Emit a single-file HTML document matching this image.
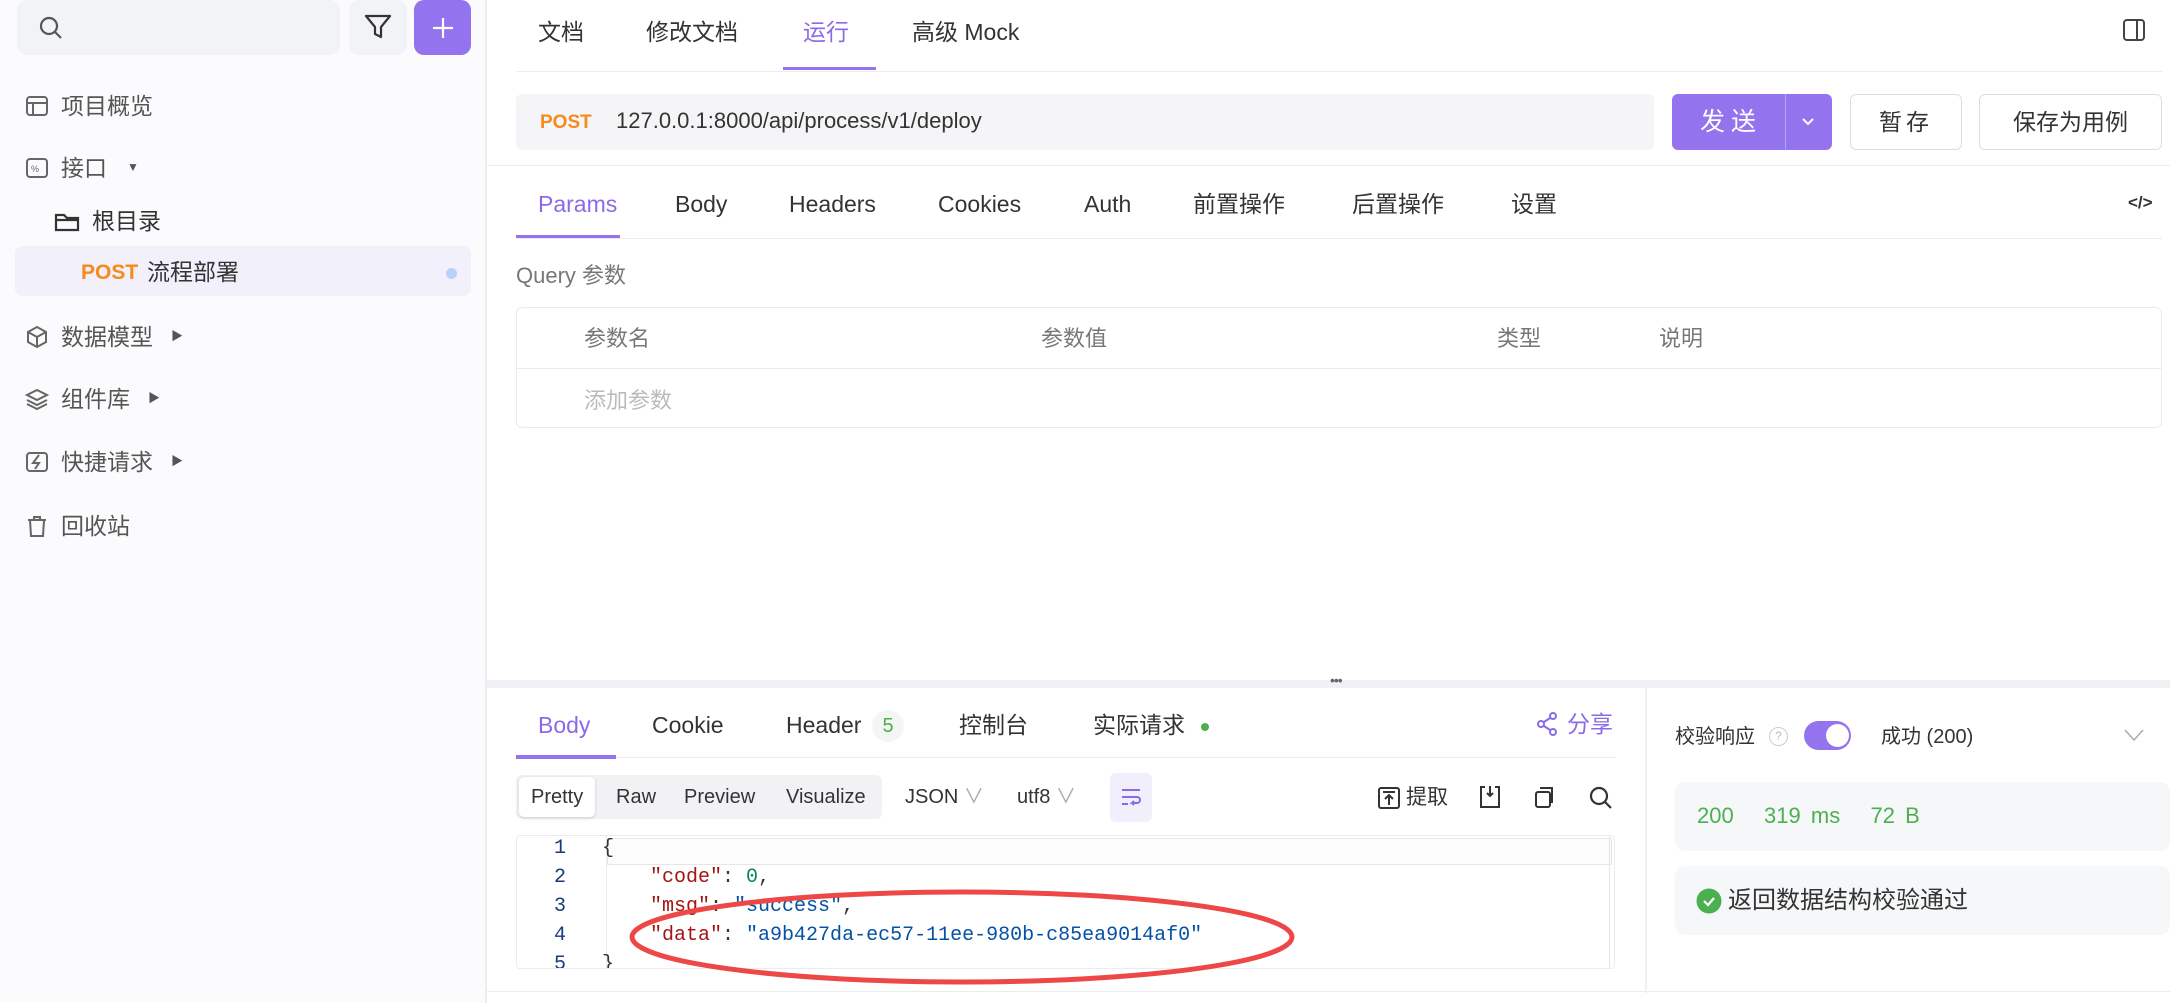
<!DOCTYPE html>
<html><head><meta charset="utf-8"><style>
*{box-sizing:border-box;margin:0;padding:0}
body{width:2170px;height:1003px;overflow:hidden;background:#fff;font-family:"Liberation Sans","Noto Sans CJK SC",sans-serif;color:#333;position:relative;line-height:1.15}
.a{position:absolute;white-space:nowrap}
.side{left:0;top:0;width:487px;height:1003px;background:#fbfbfd;border-right:2px solid #eeeef2}
.si{font-size:23px;color:#555;display:flex;align-items:center}
.si svg{margin-right:12px}
.tab{font-size:23px;color:#333}
.mono{font-family:"Liberation Mono",monospace;font-size:20px}
.ln{color:#1a3a7a;width:30px;text-align:right}
</style></head><body>
<div class="a side"></div>
<div class="a" style="left:17px;top:0;width:323px;height:55px;background:#f2f3f7;border-radius:10px"></div>
<svg class="a" style="left:38px;top:15px" width="26" height="26" viewBox="0 0 26 26" fill="none" stroke="#555" stroke-width="2.2"><circle cx="11" cy="11" r="8"/><path d="M17 17l6 6"/></svg>
<div class="a" style="left:349px;top:0;width:58px;height:55px;background:#f2f3f7;border-radius:10px"></div>
<svg class="a" style="left:364px;top:14px" width="28" height="26" viewBox="0 0 28 26" fill="none" stroke="#333" stroke-width="2.2" stroke-linejoin="round"><path d="M2 2h24l-9 11v10l-6-3v-7z"/></svg>
<div class="a" style="left:414px;top:0;width:57px;height:55px;background:#9373ee;border-radius:10px"></div>
<svg class="a" style="left:431px;top:16px" width="24" height="24" stroke="#fff" stroke-width="2.2"><path d="M12 2v20M2 12h20"/></svg>

<div class="a si" style="left:25px;top:93px"><svg width="24" height="24" fill="none" stroke="#666" stroke-width="2"><rect x="2" y="3" width="20" height="18" rx="3"/><path d="M2 9h20M8 9v12"/></svg>项目概览</div>
<div class="a si" style="left:25px;top:155px"><svg width="24" height="24" fill="none" stroke="#666" stroke-width="2"><rect x="2" y="3" width="20" height="18" rx="3"/><text x="6" y="16" font-size="9" fill="#666" stroke="none">%</text></svg>接口<span style="font-size:12px;margin-left:20px">▼</span></div>
<div class="a si" style="left:54px;top:208px;color:#333"><svg width="26" height="24" fill="none" stroke="#333" stroke-width="2.2"><path d="M2 6h8l3 3h11v12H2z"/><path d="M2 11h22"/></svg>根目录</div>
<div class="a" style="left:15px;top:246px;width:456px;height:50px;background:#f2f0fb;border-radius:8px"></div>
<div class="a" style="left:81px;top:261px;font-size:21px;font-weight:bold;color:#f7891d">POST</div>
<div class="a" style="left:147px;top:259px;font-size:23px;color:#333">流程部署</div>
<div class="a" style="left:446px;top:268px;width:11px;height:11px;border-radius:50%;background:#b9d0fb"></div>
<div class="a si" style="left:25px;top:324px"><svg width="24" height="24" fill="none" stroke="#666" stroke-width="2"><path d="M12 2l9 5v10l-9 5-9-5V7z M3 7l9 5 9-5M12 12v10"/></svg>数据模型<span style="font-size:12px;margin-left:18px">▶</span></div>
<div class="a si" style="left:25px;top:386px"><svg width="24" height="24" fill="none" stroke="#666" stroke-width="2"><path d="M12 3l10 5-10 5-10-5z M2 13l10 5 10-5M2 17l10 5 10-5"/></svg>组件库<span style="font-size:12px;margin-left:18px">▶</span></div>
<div class="a si" style="left:25px;top:449px"><svg width="24" height="24" fill="none" stroke="#666" stroke-width="2"><rect x="2" y="3" width="20" height="18" rx="3"/><path d="M14 5l-6 8h6l-4 6"/></svg>快捷请求<span style="font-size:12px;margin-left:18px">▶</span></div>
<div class="a si" style="left:25px;top:513px"><svg width="24" height="24" fill="none" stroke="#666" stroke-width="2"><path d="M3 6h18M9 6V3h6v3M5 6l1 16h12l1-16"/></svg>回收站</div>

<div class="a tab" style="left:538px;top:19px">文档</div>
<div class="a tab" style="left:646px;top:19px">修改文档</div>
<div class="a tab" style="left:803px;top:19px;color:#8b6ae8">运行</div>
<div class="a tab" style="left:912px;top:19px">高级 Mock</div>
<div class="a" style="left:783px;top:67px;width:93px;height:3px;background:#9373ee"></div>
<div class="a" style="left:516px;top:71px;width:1646px;height:1px;background:#ececf0"></div>
<svg class="a" style="left:2122px;top:18px" width="24" height="24" fill="none" stroke="#444" stroke-width="2"><rect x="2" y="2" width="20" height="20" rx="3"/><path d="M15 2v20"/></svg>

<div class="a" style="left:516px;top:94px;width:1138px;height:56px;background:#f5f5f7;border-radius:6px"></div>
<div class="a" style="left:540px;top:112px;font-size:19px;font-weight:bold;color:#f7891d">POST</div>
<div class="a" style="left:616px;top:108px;font-size:22px;color:#333">127.0.0.1:8000/api/process/v1/deploy</div>
<div class="a" style="left:1672px;top:94px;width:160px;height:56px;background:#9373ee;border-radius:6px"></div>
<div class="a" style="left:1700px;top:108px;font-size:25px;color:#fff;letter-spacing:6px">发送</div>
<div class="a" style="left:1785px;top:94px;width:1px;height:56px;background:#b7a3f3"></div>
<svg class="a" style="left:1801px;top:117px" width="14" height="10" fill="none" stroke="#fff" stroke-width="2"><path d="M2 2l5 5 5-5"/></svg>
<div class="a" style="left:1850px;top:94px;width:112px;height:56px;border:1px solid #ddd;border-radius:6px;font-size:23px;text-align:center;line-height:54px;letter-spacing:4px">暂存</div>
<div class="a" style="left:1979px;top:94px;width:183px;height:56px;border:1px solid #ddd;border-radius:6px;font-size:23px;text-align:center;line-height:54px">保存为用例</div>
<div class="a" style="left:487px;top:165px;width:1683px;height:1px;background:#ececf0"></div>

<div class="a tab" style="left:538px;top:191px;color:#8b6ae8">Params</div>
<div class="a tab" style="left:675px;top:191px">Body</div>
<div class="a tab" style="left:789px;top:191px">Headers</div>
<div class="a tab" style="left:938px;top:191px">Cookies</div>
<div class="a tab" style="left:1084px;top:191px">Auth</div>
<div class="a tab" style="left:1193px;top:191px">前置操作</div>
<div class="a tab" style="left:1352px;top:191px">后置操作</div>
<div class="a tab" style="left:1511px;top:191px">设置</div>
<div class="a" style="left:2128px;top:193px;font-size:17px;font-weight:bold">&lt;/&gt;</div>
<div class="a" style="left:516px;top:235px;width:104px;height:3px;background:#9373ee"></div>
<div class="a" style="left:516px;top:238px;width:1646px;height:1px;background:#ececf0"></div>
<div class="a" style="left:516px;top:263px;font-size:22px;color:#777">Query 参数</div>
<div class="a" style="left:516px;top:307px;width:1646px;height:121px;border:1px solid #ebebef;border-radius:6px"></div>
<div class="a" style="left:517px;top:368px;width:1644px;height:1px;background:#ebebef"></div>
<div class="a" style="left:584px;top:326px;font-size:22px;color:#777">参数名</div>
<div class="a" style="left:1041px;top:326px;font-size:22px;color:#777">参数值</div>
<div class="a" style="left:1497px;top:326px;font-size:22px;color:#777">类型</div>
<div class="a" style="left:1659px;top:326px;font-size:22px;color:#777">说明</div>
<div class="a" style="left:584px;top:388px;font-size:22px;color:#bbb">添加参数</div>

<div class="a" style="left:487px;top:680px;width:1683px;height:8px;background:#f1f1f5"></div>
<div class="a" style="left:1330px;top:672px;font-size:14px;color:#666;letter-spacing:-1px">•••</div>
<div class="a" style="left:1645px;top:688px;width:2px;height:305px;background:#f1f1f5"></div>

<div class="a tab" style="left:538px;top:712px;color:#8b6ae8">Body</div>
<div class="a tab" style="left:652px;top:712px">Cookie</div>
<div class="a tab" style="left:786px;top:712px">Header</div>
<div class="a" style="left:872px;top:710px;width:32px;height:32px;border-radius:50%;background:#f4f6f4;color:#4caf50;font-size:20px;text-align:center;line-height:32px">5</div>
<div class="a tab" style="left:959px;top:712px">控制台</div>
<div class="a tab" style="left:1093px;top:712px">实际请求</div>
<div class="a" style="left:1201px;top:723px;width:8px;height:8px;border-radius:50%;background:#4caf50"></div>
<svg class="a" style="left:1536px;top:712px" width="22" height="24" fill="none" stroke="#8b6ae8" stroke-width="2"><circle cx="17" cy="4" r="3"/><circle cx="5" cy="12" r="3"/><circle cx="17" cy="20" r="3"/><path d="M8 10l6-4M8 14l6 4"/></svg>
<div class="a tab" style="left:1567px;top:711px;color:#8b6ae8">分享</div>
<div class="a" style="left:516px;top:757px;width:1100px;height:1px;background:#ececf0"></div>
<div class="a" style="left:516px;top:755px;width:100px;height:4px;background:#9373ee"></div>

<div class="a" style="left:516px;top:775px;width:366px;height:44px;background:#f2f2f5;border-radius:6px"></div>
<div class="a" style="left:519px;top:777px;width:76px;height:40px;background:#fff;border-radius:5px;box-shadow:0 1px 3px #ccc"></div>
<div class="a" style="left:531px;top:786px;font-size:20px">Pretty</div>
<div class="a" style="left:616px;top:786px;font-size:20px">Raw</div>
<div class="a" style="left:684px;top:786px;font-size:20px">Preview</div>
<div class="a" style="left:786px;top:786px;font-size:20px">Visualize</div>
<div class="a" style="left:905px;top:786px;font-size:20px">JSON <span style="color:#aaa">∨</span></div>
<div class="a" style="left:1017px;top:786px;font-size:20px">utf8 <span style="color:#aaa">∨</span></div>
<div class="a" style="left:1110px;top:773px;width:42px;height:49px;background:#f2effc;border-radius:6px"></div>
<svg class="a" style="left:1119px;top:785px" width="24" height="24" fill="none" stroke="#8b6ae8" stroke-width="2"><path d="M3 5h18M3 12h15a3 3 0 010 6h-5l2-2M13 18l2 2M3 19h6"/></svg>
<svg class="a" style="left:1377px;top:786px" width="24" height="24" fill="none" stroke="#333" stroke-width="2"><rect x="2" y="2" width="20" height="20" rx="2"/><path d="M6 6h12M12 19V10M8 13l4-4 4 4"/></svg>
<div class="a" style="left:1406px;top:786px;font-size:21px">提取</div>
<svg class="a" style="left:1478px;top:784px" width="24" height="26" fill="none" stroke="#333" stroke-width="2"><path d="M7 3H3v20h18V3h-4M12 2v10M9 9l3 3 3-3"/></svg>
<svg class="a" style="left:1533px;top:785px" width="24" height="24" fill="none" stroke="#333" stroke-width="2"><rect x="3" y="7" width="14" height="15" rx="2"/><path d="M7 3h12v15"/></svg>
<svg class="a" style="left:1588px;top:785px" width="26" height="26" fill="none" stroke="#333" stroke-width="2.2"><circle cx="11" cy="11" r="8"/><path d="M17 17l6 6"/></svg>

<div class="a" style="left:516px;top:835px;width:1099px;height:134px;border:1px solid #ececf0;border-radius:4px;overflow:hidden">
<div class="a" style="left:90px;top:2px;width:1005px;height:27px;border:1px solid #e6e6e6;background:#fcfcfc"></div>
<div class="a" style="left:89px;top:0;width:1px;height:132px;background:#eee"></div>
<div class="a" style="left:1092px;top:0;width:1px;height:132px;background:#e6e6e6"></div>
</div>
<div class="a mono ln" style="left:536px;top:837px">1</div>
<div class="a mono ln" style="left:536px;top:866px">2</div>
<div class="a mono ln" style="left:536px;top:895px">3</div>
<div class="a mono ln" style="left:536px;top:924px">4</div>
<div class="a mono ln" style="left:536px;top:953px;height:15px;overflow:hidden">5</div>
<div class="a mono" style="left:602px;top:837px">{</div>
<div class="a mono" style="left:602px;top:866px">&nbsp;&nbsp;&nbsp;&nbsp;<span style="color:#a31515">"code"</span>: <span style="color:#098658">0</span>,</div>
<div class="a mono" style="left:602px;top:895px">&nbsp;&nbsp;&nbsp;&nbsp;<span style="color:#a31515">"msg"</span>: <span style="color:#0451a5">"success"</span>,</div>
<div class="a mono" style="left:602px;top:924px">&nbsp;&nbsp;&nbsp;&nbsp;<span style="color:#a31515">"data"</span>: <span style="color:#0451a5">"a9b427da-ec57-11ee-980b-c85ea9014af0"</span></div>
<div class="a mono" style="left:602px;top:953px;height:15px;overflow:hidden">}</div>
<svg class="a" style="left:620px;top:880px" width="690" height="115"><ellipse cx="342" cy="57" rx="330" ry="45" fill="none" stroke="#ee4747" stroke-width="5"/></svg>
<div class="a" style="left:487px;top:991px;width:1683px;height:1px;background:#ececf0"></div>

<div class="a" style="left:1675px;top:726px;font-size:20px;color:#333">校验响应</div>
<div class="a" style="left:1769px;top:727px;width:19px;height:19px;border:1.5px solid #ccc;border-radius:50%;font-size:12px;color:#bbb;text-align:center;line-height:16px">?</div>
<div class="a" style="left:1804px;top:721px;width:47px;height:29px;background:#9373ee;border-radius:15px"></div>
<div class="a" style="left:1826px;top:724px;width:23px;height:23px;background:#fff;border-radius:50%"></div>
<div class="a" style="left:1881px;top:726px;font-size:20px;color:#333">成功 (200)</div>
<svg class="a" style="left:2124px;top:728px" width="20" height="14" fill="none" stroke="#aaa" stroke-width="1.5"><path d="M1 2l9 10 9-10"/></svg>
<div class="a" style="left:1675px;top:782px;width:495px;height:69px;background:#f6f7f9;border-radius:10px"></div>
<div class="a" style="left:1697px;top:803px;font-size:22px;color:#4caf50;word-spacing:4px">200 &nbsp; 319 ms &nbsp; 72 B</div>
<div class="a" style="left:1675px;top:866px;width:495px;height:69px;background:#f6f7f9;border-radius:10px"></div>
<svg class="a" style="left:1696px;top:888px" width="26" height="26"><circle cx="13" cy="13" r="12.5" fill="#4caf50"/><path d="M8 13l4 4 6-7" fill="none" stroke="#fff" stroke-width="2.2"/></svg>
<div class="a" style="left:1728px;top:887px;font-size:24px;color:#333">返回数据结构校验通过</div>
</body></html>
